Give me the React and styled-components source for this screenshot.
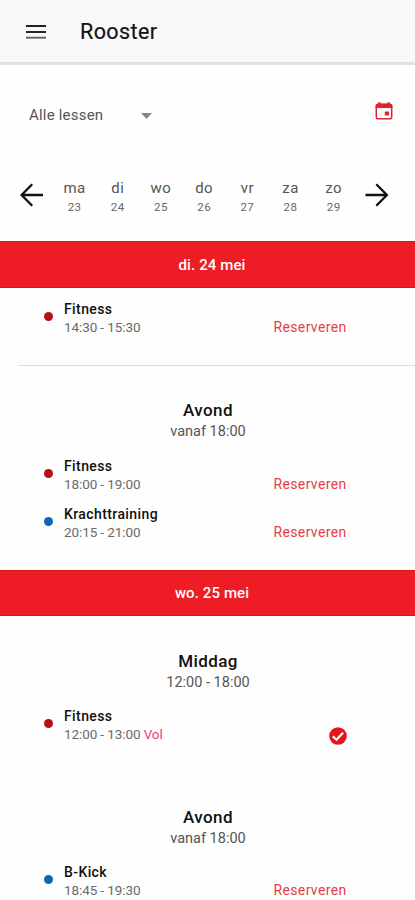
import React from "react";
import styled, { createGlobalStyle } from "styled-components";

const GlobalStyle = createGlobalStyle`
  * {
    box-sizing: border-box;
  }

  body {
    margin: 0;
    background: #fefefe;
    font-family: Roboto, sans-serif;
    color: #111;
  }
`;

const Page = styled.div`
  width: 100%;
  height: 900px;
  overflow: hidden;
`;

const Header = styled.header`
  display: flex;
  align-items: center;
  height: 65px;
  padding: 1px 26px 0;
  background: #f8f8f8;
  border-bottom: 3px solid #e0e0e0;

  h1 {
    margin: 0 0 0 34px;
    font-size: 21.5px;
    font-weight: 400;
    letter-spacing: 0.4px;
    -webkit-text-stroke: 0.2px #222;
  }
`;

const Filters = styled.div`
  display: flex;
  justify-content: space-between;
  align-items: center;
  height: 98px;
  padding: 2px 22px 0 29px;
`;

const Select = styled.div`
  display: flex;
  align-items: center;
  justify-content: space-between;
  width: 123px;
  font-size: 15px;
  letter-spacing: 0.2px;
  color: #555;

  svg {
    margin-top: 2px;
  }
`;

const CalendarButton = styled.div`
  display: flex;
  padding-bottom: 9px;
`;

const Week = styled.div`
  display: flex;
  align-items: center;
  height: 78px;
  padding: 0 25px 14px 19px;
`;

const Days = styled.div`
  display: grid;
  grid-template-columns: repeat(7, 43.2px);
  margin: 5px 9px 0 9px;
`;

const Day = styled.div`
  text-align: center;
  font-size: 15px;
  line-height: 19px;
  letter-spacing: 0.5px;
  color: #555;

  small {
    display: block;
    font-size: 11.5px;
    line-height: 18px;
    color: #666;
  }
`;

const Banner = styled.div`
  display: flex;
  align-items: center;
  justify-content: center;
  height: 46.8px;
  padding: 1px 0 0 9px;
  background: #ee1c25;
  border-top: 1px solid #dc141a;
  border-bottom: 1px solid #dc141a;
  color: #fff;
  font-size: 15px;
  font-weight: 500;
  letter-spacing: 0.1px;
`;

const Period = styled.section`
  padding: ${(props) => (props.$titled ? "33.5px" : "12.2px")} 0 16.5px;
`;

const PeriodTitle = styled.div`
  margin-bottom: 14.5px;
  padding-left: 1px;
  text-align: center;
  font-size: 14.5px;
  line-height: 20px;
  color: #555;

  h2 {
    margin: 0 0 1px;
    font-size: 17px;
    line-height: 22px;
    font-weight: 500;
    letter-spacing: 0.4px;
    color: #111;
  }
`;

const Divider = styled.div`
  height: 1px;
  margin-left: 18px;
  background: #dedede;
`;

const LessonRow = styled.div`
  display: flex;
  height: 48.2px;
  padding: 0 68.5px 0 43.5px;
`;

const Dot = styled.span`
  width: 9px;
  height: 9px;
  margin: 12px 11.5px 0 0;
  border-radius: 50%;
  background: ${(props) => props.$color};
`;

const LessonInfo = styled.div`
  flex: 1;
  font-size: 13.5px;
  line-height: 18px;
  letter-spacing: -0.1px;
  color: #6a6a6a;

  strong {
    display: block;
    font-size: 14px;
    font-weight: 500;
    letter-spacing: 0.4px;
    color: #111;
  }
`;

const Full = styled.span`
  color: #e83e70;
`;

const Reserve = styled.div`
  padding-top: 18px;
  font-size: 14px;
  line-height: 18px;
  letter-spacing: 0.35px;
  color: #e4404a;
`;

const Booked = styled.div`
  display: flex;
  padding-top: 20px;
`;

const RED = "#b3101a";
const BLUE = "#0c68b4";

const days = [
  ["ma", 23],
  ["di", 24],
  ["wo", 25],
  ["do", 26],
  ["vr", 27],
  ["za", 28],
  ["zo", 29],
];

function MenuIcon() {
  return (
    <svg width="20" height="16" viewBox="0 0 20 16">
      <path d="M0 2h20M0 8h20" stroke="#222" strokeWidth="2" />
      <path d="M0 13.7h20" stroke="#666" strokeWidth="2" />
    </svg>
  );
}

function CaretIcon() {
  return (
    <svg width="11" height="6" viewBox="0 0 11 6">
      <path d="M0 0h11L5.5 6z" fill="#888" />
    </svg>
  );
}

function CalendarIcon() {
  return (
    <svg width="18" height="18" viewBox="0 0 18 18">
      <rect x="1.3" y="2.6" width="15.4" height="14.2" rx="1.8" fill="none" stroke="#e3202b" strokeWidth="1.5" />
      <path d="M.7 6V3.8Q.7 1.6 3 1.6h12q2.3 0 2.3 2.2V6z" fill="#e3202b" />
      <path d="M4.4 .3v2.5M13.6 .3v2.5" stroke="#e3202b" strokeWidth="2.2" />
      <rect x="9.8" y="9.4" width="4.2" height="4.2" rx=".6" fill="#e3202b" />
    </svg>
  );
}

function ArrowIcon({ d }) {
  return (
    <svg width="25" height="24" viewBox="0 0 25 24">
      <path d={d} fill="none" stroke="#111" strokeWidth="2.3" />
    </svg>
  );
}

function CheckIcon() {
  return (
    <svg width="18" height="18" viewBox="0 0 18 18">
      <circle cx="9" cy="9" r="8.8" fill="#e8141c" />
      <path d="M3.8 9.2l3.6 3.5 6.6-7" fill="none" stroke="#fff" strokeWidth="2.2" />
    </svg>
  );
}

function Lesson(props) {
  return (
    <LessonRow>
      <Dot $color={props.color} />
      <LessonInfo>
        <strong>{props.name}</strong>
        {props.time} {props.full && <Full>Vol</Full>}
      </LessonInfo>
      {props.booked ? (
        <Booked>
          <CheckIcon />
        </Booked>
      ) : (
        <Reserve>Reserveren</Reserve>
      )}
    </LessonRow>
  );
}

function App() {
  return (
    <Page>
      <GlobalStyle />
      <Header>
        <MenuIcon />
        <h1>Rooster</h1>
      </Header>

      <Filters>
        <Select>
          Alle lessen
          <CaretIcon />
        </Select>
        <CalendarButton>
          <CalendarIcon />
        </CalendarButton>
      </Filters>

      <Week>
        <ArrowIcon d="M13.2 1.2L2.6 12l10.6 10.8M2.6 12H24" />
        <Days>
          {days.map(([name, date]) => (
            <Day key={name}>
              {name}
              <small>{date}</small>
            </Day>
          ))}
        </Days>
        <ArrowIcon d="M12.3 1.2L22.9 12l-10.6 10.8M22.9 12H1.5" />
      </Week>

      <Banner>di. 24 mei</Banner>
      <Period>
        <Lesson color={RED} name="Fitness" time="14:30 - 15:30" />
      </Period>
      <Divider />
      <Period $titled>
        <PeriodTitle>
          <h2>Avond</h2>
          vanaf 18:00
        </PeriodTitle>
        <Lesson color={RED} name="Fitness" time="18:00 - 19:00" />
        <Lesson color={BLUE} name="Krachttraining" time="20:15 - 21:00" />
      </Period>

      <Banner>wo. 25 mei</Banner>
      <Period $titled>
        <PeriodTitle>
          <h2>Middag</h2>
          12:00 - 18:00
        </PeriodTitle>
        <Lesson color={RED} name="Fitness" time="12:00 - 13:00" full booked />
      </Period>
      <Period $titled>
        <PeriodTitle>
          <h2>Avond</h2>
          vanaf 18:00
        </PeriodTitle>
        <Lesson color={BLUE} name="B-Kick" time="18:45 - 19:30" />
      </Period>
    </Page>
  );
}

export default App;
